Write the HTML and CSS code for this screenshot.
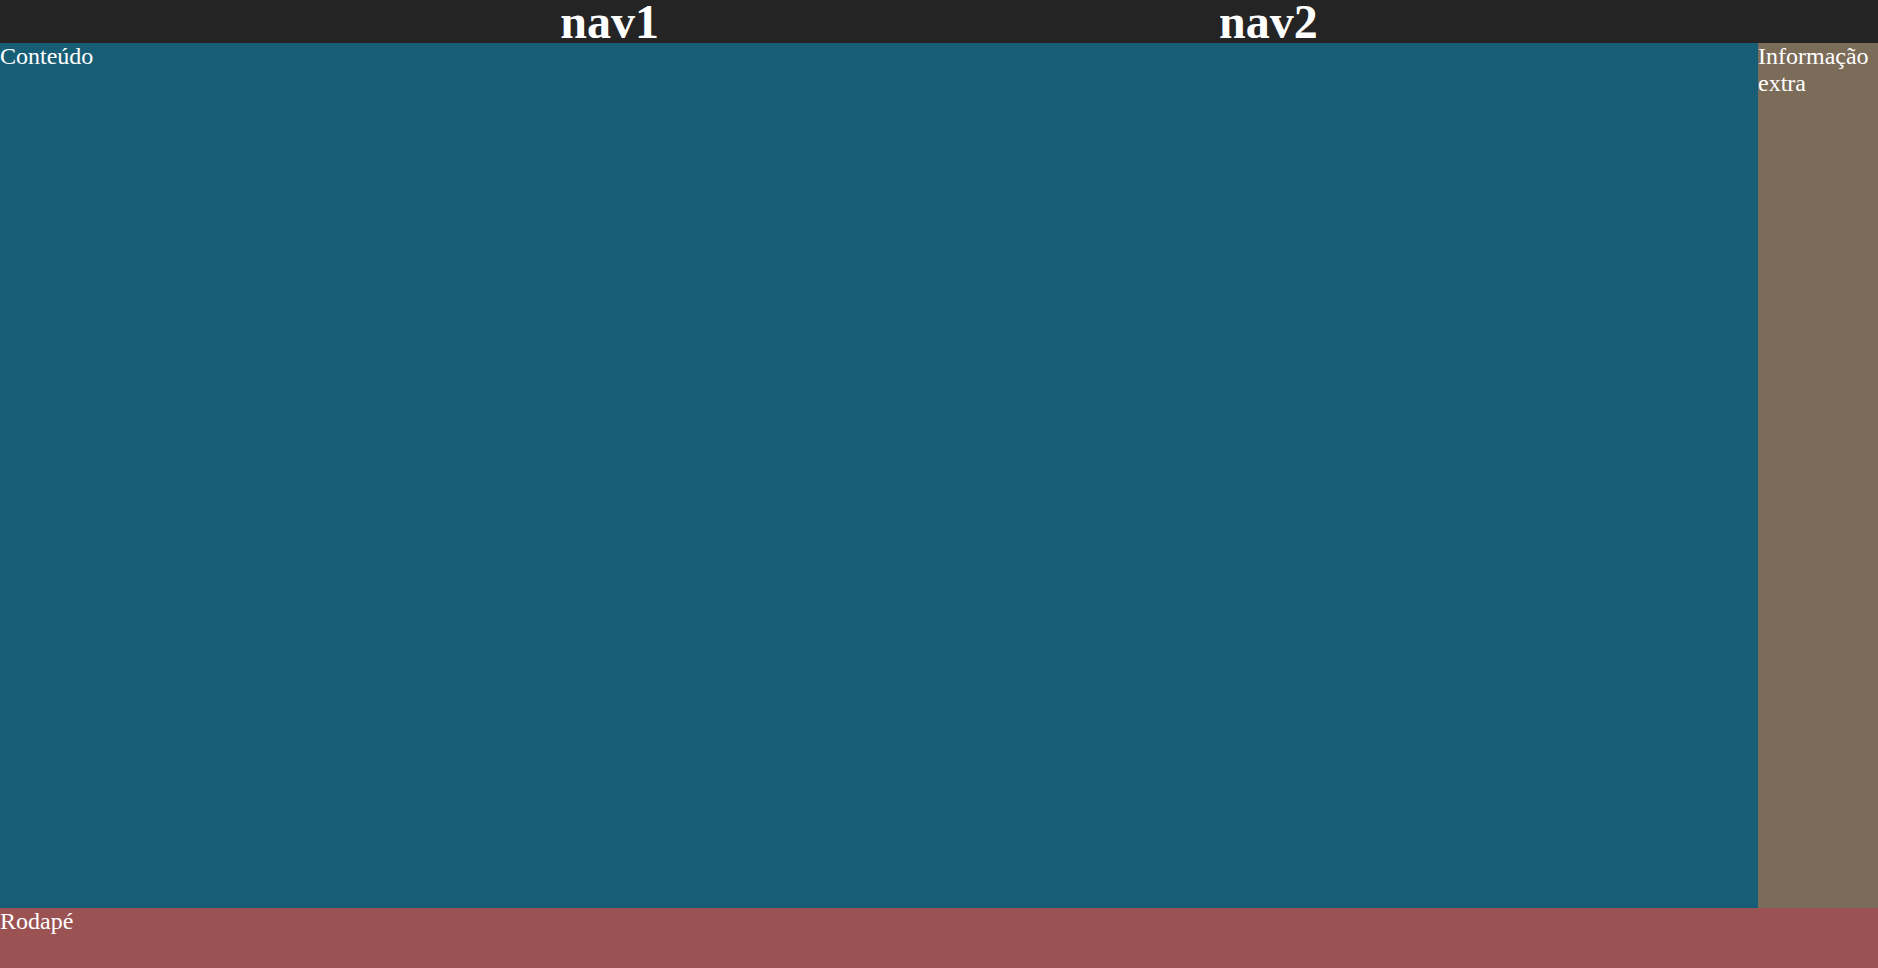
FILE: index.html
```html
<!DOCTYPE html>
<html lang="pt">
<head>
<meta charset="utf-8">
<title>Layout</title>
<link rel="stylesheet" href="styles.css">
</head>
<body>
<div class="page">
  <header class="topbar">
    <div class="nav-item">nav1</div>
    <div class="nav-item">nav2</div>
  </header>
  <div class="middle">
    <main class="content">Conteúdo</main>
    <aside class="extra">Informação extra</aside>
  </div>
  <footer class="footer">Rodapé</footer>
</div>
</body>
</html>
```

FILE: styles.css
```css
html, body {
  margin: 0;
  padding: 0;
  height: 100%;
}
body {
  font-family: "Liberation Serif", "Times New Roman", serif;
  font-size: 24px;
  color: #ffffff;
}
.page {
  display: flex;
  flex-direction: column;
  height: 968px;
}
.topbar {
  height: 43px;
  flex: 0 0 43px;
  background: #242424;
  display: flex;
  align-items: center;
  justify-content: space-evenly;
}
.nav-item {
  font-size: 48px;
  line-height: 43px;
  font-weight: bold;
}
.middle {
  flex: 1 1 auto;
  display: flex;
  min-height: 0;
}
.content {
  flex: 1 1 auto;
  background: #185d76;
}
.extra {
  flex: 0 0 120px;
  width: 120px;
  background: #7b6b59;
}
.footer {
  flex: 0 0 60px;
  height: 60px;
  background: #9a5252;
}
```
